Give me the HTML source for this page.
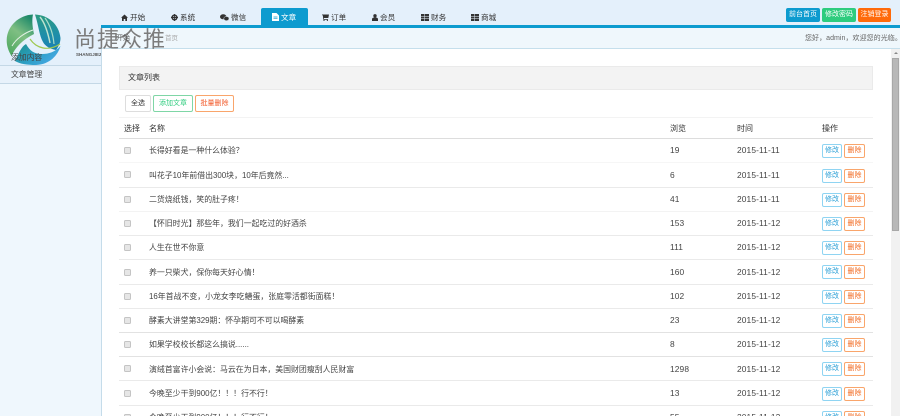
<!DOCTYPE html>
<html><head><meta charset="utf-8">
<style>
html,body{margin:0;padding:0;width:900px;height:416px;overflow:hidden;background:#fff}
body{position:relative;font-family:"Liberation Sans","Noto Sans CJK SC",sans-serif;font-size:8px;color:#444}
.a{position:absolute;white-space:nowrap}
.nav{top:13px;height:10px;line-height:10px;font-size:7.6px;color:#333}
.nav svg{vertical-align:-1px;margin-right:2px}
.tb{top:8px;height:14px;line-height:14px;border-radius:2px;color:#fff;text-align:center;font-size:7px}
.t{left:149px;font-size:7.9px;color:#444;line-height:12px;margin-top:1px}
.n{left:670px;font-size:8.4px;color:#444;line-height:12px;letter-spacing:.12px}
.d{left:737px;font-size:8.4px;color:#444;line-height:12px;letter-spacing:.12px}
.cb{left:124px;width:5px;height:5px;border:1px solid #c4c4c4;border-radius:1.5px;background:#e6e6e6;margin-top:1px}
.e,.x{height:14px;line-height:12px;border-radius:2px;font-size:7px;text-align:center;box-sizing:border-box;background:#fff}
.e{left:822px;width:20px;border:1px solid #8fd4f2;color:#2a9fd6}
.x{left:844px;width:21px;border:1px solid #f9a56b;color:#f26a21}
.l{left:119px;width:754px;height:1px;background:#eaeaea}
.h{font-size:8px;color:#333;line-height:12px;top:123px}
</style></head><body>
<div class="a" style="left:0;top:0;width:900px;height:25px;background:#e4f0fb"></div>
<div class="a" style="left:0;top:25px;width:101px;height:40px;background:#e4f0fb"></div>
<div class="a" style="left:0;top:65px;width:101px;height:1px;background:#c4d8e6"></div>
<div class="a" style="left:0;top:66px;width:101px;height:17px;background:#e8f2fb"></div>
<div class="a" style="left:0;top:83px;width:101px;height:1px;background:#c4d8e6"></div>
<div class="a" style="left:0;top:84px;width:101px;height:332px;background:#eff7fd"></div>
<div class="a" style="left:101px;top:48px;width:1px;height:368px;background:#c5dcea"></div>
<div class="a" style="left:101px;top:25px;width:799px;height:3px;background:#0d9bcf"></div>
<div class="a" style="left:101px;top:28px;width:799px;height:20px;background:#eff7fc"></div>
<div class="a" style="left:101px;top:48px;width:799px;height:1px;background:#c5dfec"></div>

<svg class="a" style="left:6px;top:13px" width="55" height="53" viewBox="0 0 55 53">
<defs>
<linearGradient id="g1" x1="0.7" y1="0" x2="0.2" y2="1"><stop offset="0" stop-color="#1f8a6a"/><stop offset=".45" stop-color="#7fbf83"/><stop offset="1" stop-color="#4fa860"/></linearGradient>
<linearGradient id="g2" x1="0" y1="0" x2="0" y2="1"><stop offset="0" stop-color="#2c9a80"/><stop offset=".55" stop-color="#1f8fa8"/><stop offset="1" stop-color="#1a80b4"/></linearGradient>
<linearGradient id="g3" x1="0" y1="0" x2="1" y2="0.6"><stop offset="0" stop-color="#1a8f8c"/><stop offset=".6" stop-color="#2fa0c8"/><stop offset="1" stop-color="#46a8e4"/></linearGradient>
</defs>
<path d="M27 1.5C13 2 1 13 .7 27C.6 33 2.5 38 5.5 43C9 35 16 27 28 21C26 12 26 6 27 1.5Z" fill="url(#g1)"/>
<path d="M27 17C18 20 10 26 6 33" stroke="#e4f2e6" stroke-width="1" fill="none"/>
<path d="M29 1.5C42 2 53 11 54.5 25C54.5 29 53 33 50 37C44 36 39 33 37 29C33 22 33 14 29 1.5Z" fill="url(#g2)"/>
<path d="M34 4C39 10 42 20 44 30" stroke="#bfe3d0" stroke-width="1.4" fill="none"/>
<path d="M39 5C44 12 47 20 48 31" stroke="#a8dcc8" stroke-width="1.2" fill="none"/>
<path d="M9 48C13 40 15 34 20 31C24 38 28 41 36 41C43 41 49 39 54.5 33C52 42 44 51.5 30 52C21 52 14 51 9 48Z" fill="url(#g3)"/>
<path d="M24 26C30 35 42 39 54 31" stroke="#9fc850" stroke-width="1.2" fill="none"/>
</svg>
<div class="a" style="left:74px;top:27px;font-size:22px;line-height:26px;color:#7c7c7c;letter-spacing:1px">尚捷众推</div>
<div class="a" style="left:76px;top:52px;font-size:4.5px;line-height:6px;color:#555;font-weight:bold;width:25px;overflow:hidden">SHANGJIEZHONGTUI</div>
<div class="a" style="left:11px;top:52px;font-size:7.8px;line-height:11px;color:#444">添加内容</div>
<div class="a" style="left:11px;top:69px;font-size:7.8px;line-height:11px;color:#444">文章管理</div>

<div class="a nav" style="left:121px"><svg width="7" height="7" viewBox="0 0 7 7"><path d="M3.5 .5L7 3.7H6V7H4.3V5H2.7V7H1V3.7H0Z" fill="#333"/></svg>开始</div>
<div class="a nav" style="left:171px"><svg width="7" height="7" viewBox="0 0 7 7"><circle cx="3.5" cy="3.5" r="2.3" fill="none" stroke="#333" stroke-width="1.6"/><path d="M3.5 0V7M0 3.5H7" stroke="#333" stroke-width=".9"/></svg>系统</div>
<div class="a nav" style="left:220px"><svg width="9" height="7" viewBox="0 0 9 7"><ellipse cx="3.2" cy="2.8" rx="3.2" ry="2.5" fill="#333"/><ellipse cx="6.4" cy="4.6" rx="2.6" ry="2.1" fill="#333" stroke="#e4f0fb" stroke-width=".5"/></svg>微信</div>
<div class="a" style="left:261px;top:8px;width:47px;height:17px;background:#0d9bcf;border-radius:2px 2px 0 0"></div>
<div class="a nav" style="left:272px;color:#fff;top:13px"><svg width="7" height="8" viewBox="0 0 7 8"><path d="M0 0H4.5L7 2.5V8H0Z" fill="#fff"/><path d="M1.5 4H5.5M1.5 5.7H5.5" stroke="#0d9bcf" stroke-width=".7"/></svg>文章</div>
<div class="a nav" style="left:322px"><svg width="7" height="7" viewBox="0 0 7 7"><path d="M0 .5H7L6.3 4H1.8L2 5H6V5.8H1.3L.8 1.3H0Z" fill="#333"/><circle cx="2" cy="6.4" r=".6" fill="#333"/><circle cx="5.4" cy="6.4" r=".6" fill="#333"/></svg>订单</div>
<div class="a nav" style="left:372px"><svg width="6" height="7" viewBox="0 0 6 7"><circle cx="3" cy="1.8" r="1.7" fill="#333"/><path d="M0 7V5.2C0 4 1.2 3.4 3 3.4S6 4 6 5.2V7Z" fill="#333"/></svg>会员</div>
<div class="a nav" style="left:421px"><svg width="8" height="7" viewBox="0 0 8 7"><path d="M0 0H3V2H0ZM3.5 0H8V2H3.5ZM0 2.5H3V4.5H0ZM3.5 2.5H8V4.5H3.5ZM0 5H3V7H0ZM3.5 5H8V7H3.5Z" fill="#333"/></svg>财务</div>
<div class="a nav" style="left:471px"><svg width="8" height="7" viewBox="0 0 8 7"><path d="M0 0H3V2H0ZM3.5 0H8V2H3.5ZM0 2.5H3V4.5H0ZM3.5 2.5H8V4.5H3.5ZM0 5H3V7H0ZM3.5 5H8V7H3.5Z" fill="#333"/></svg>商城</div>

<div class="a tb" style="left:786px;width:34px;background:#0d9bcf">前台首页</div>
<div class="a tb" style="left:822px;width:34px;background:#2ecc7e">修改密码</div>
<div class="a tb" style="left:858px;width:33px;background:#ff6a0a">注销登录</div>

<div class="a" style="left:116px;top:33px;font-size:7px;line-height:11px;color:#555">开始</div>
<div class="a" style="left:165px;top:33px;font-size:6.5px;line-height:11px;color:#aaa">首页</div>
<div class="a" style="left:805px;top:33px;font-size:7px;line-height:11px;color:#666;letter-spacing:.05px">您好，admin，欢迎您的光临。</div>

<div class="a" style="left:119px;top:66px;width:752px;height:22px;background:#f3f3f3;border:1px solid #eaeaea"></div>
<div class="a" style="left:128px;top:72px;font-size:8px;line-height:12px;color:#333">文章列表</div>

<div class="a" style="left:125px;top:95px;width:26px;height:17px;box-sizing:border-box;border:1px solid #ddd;border-radius:2px;text-align:center;line-height:15px;font-size:7px;color:#333">全选</div>
<div class="a" style="left:153px;top:95px;width:40px;height:17px;box-sizing:border-box;border:1px solid #7fd6a6;border-radius:2px;text-align:center;line-height:15px;font-size:7px;color:#2ecc7e">添加文章</div>
<div class="a" style="left:195px;top:95px;width:39px;height:17px;box-sizing:border-box;border:1px solid #f9a56b;border-radius:2px;text-align:center;line-height:15px;font-size:7px;color:#f25a2a">批量删除</div>

<div class="a l" style="top:117px;background:#f3f3f3"></div>
<div class="a h" style="left:124px">选择</div><div class="a h" style="left:149px">名称</div><div class="a h" style="left:670px">浏览</div><div class="a h" style="left:737px">时间</div><div class="a h" style="left:822px">操作</div>
<div class="a l" style="top:138px;background:#ddd"></div>

<div class="a cb" style="top:146px"></div><div class="a t" style="top:144px">长得好看是一种什么体验？</div><div class="a n" style="top:144px">19</div><div class="a d" style="top:144px">2015-11-11</div><div class="a e" style="top:144px">修改</div><div class="a x" style="top:144px">删除</div>
<div class="a l" style="top:162px;background:#f6f6f6"></div>
<div class="a cb" style="top:170px"></div><div class="a t" style="top:169px">叫花子10年前借出300块，10年后竟然...</div><div class="a n" style="top:169px">6</div><div class="a d" style="top:169px">2015-11-11</div><div class="a e" style="top:169px">修改</div><div class="a x" style="top:169px">删除</div>
<div class="a l" style="top:187px"></div>
<div class="a cb" style="top:195px"></div><div class="a t" style="top:193px">二货烧纸钱，笑的肚子疼！</div><div class="a n" style="top:193px">41</div><div class="a d" style="top:193px">2015-11-11</div><div class="a e" style="top:193px">修改</div><div class="a x" style="top:193px">删除</div>
<div class="a l" style="top:211px;background:#f3f3f3"></div>
<div class="a cb" style="top:219px"></div><div class="a t" style="top:217px">【怀旧时光】那些年，我们一起吃过的好酒杀</div><div class="a n" style="top:217px">153</div><div class="a d" style="top:217px">2015-11-12</div><div class="a e" style="top:217px">修改</div><div class="a x" style="top:217px">删除</div>
<div class="a l" style="top:235px"></div>
<div class="a cb" style="top:243px"></div><div class="a t" style="top:241px">人生在世不你意</div><div class="a n" style="top:241px">111</div><div class="a d" style="top:241px">2015-11-12</div><div class="a e" style="top:241px">修改</div><div class="a x" style="top:241px">删除</div>
<div class="a l" style="top:259px"></div>
<div class="a cb" style="top:268px"></div><div class="a t" style="top:266px">养一只柴犬，保你每天好心情！</div><div class="a n" style="top:266px">160</div><div class="a d" style="top:266px">2015-11-12</div><div class="a e" style="top:265px">修改</div><div class="a x" style="top:265px">删除</div>
<div class="a l" style="top:284px"></div>
<div class="a cb" style="top:292px"></div><div class="a t" style="top:290px">16年首战不变，小龙女李吃鳝蛋，张庭零活都街面糕！</div><div class="a n" style="top:290px">102</div><div class="a d" style="top:290px">2015-11-12</div><div class="a e" style="top:290px">修改</div><div class="a x" style="top:290px">删除</div>
<div class="a l" style="top:308px"></div>
<div class="a cb" style="top:316px"></div><div class="a t" style="top:314px">酵素大讲堂第329期：怀孕期可不可以喝酵素</div><div class="a n" style="top:314px">23</div><div class="a d" style="top:314px">2015-11-12</div><div class="a e" style="top:314px">修改</div><div class="a x" style="top:314px">删除</div>
<div class="a l" style="top:332px;background:#e2e2e2"></div>
<div class="a cb" style="top:340px"></div><div class="a t" style="top:338px">如果学校校长都这么搞说......</div><div class="a n" style="top:338px">8</div><div class="a d" style="top:338px">2015-11-12</div><div class="a e" style="top:338px">修改</div><div class="a x" style="top:338px">删除</div>
<div class="a l" style="top:356px;background:#e2e2e2"></div>
<div class="a cb" style="top:364px"></div><div class="a t" style="top:363px">演绒首富许小会说：马云在为日本，美国财团瘦刮人民财富</div><div class="a n" style="top:363px">1298</div><div class="a d" style="top:363px">2015-11-12</div><div class="a e" style="top:362px">修改</div><div class="a x" style="top:362px">删除</div>
<div class="a l" style="top:380px"></div>
<div class="a cb" style="top:389px"></div><div class="a t" style="top:387px">今晚至少干到900亿！！！行不行！</div><div class="a n" style="top:387px">13</div><div class="a d" style="top:387px">2015-11-12</div><div class="a e" style="top:387px">修改</div><div class="a x" style="top:387px">删除</div>
<div class="a l" style="top:405px"></div>
<div class="a cb" style="top:413px"></div><div class="a t" style="top:411px">今晚至少干到900亿！！！行不行！</div><div class="a n" style="top:411px">55</div><div class="a d" style="top:411px">2015-11-12</div><div class="a e" style="top:411px">修改</div><div class="a x" style="top:411px">删除</div>

<div class="a" style="left:891px;top:49px;width:9px;height:367px;background:#f1f1f1"></div>
<div class="a" style="left:892px;top:58px;width:7px;height:173px;box-sizing:border-box;background:#b8b8b8;border:1px solid #a8a8a8"></div>
<div class="a" style="left:894px;top:52px;width:0;height:0;border-left:2px solid transparent;border-right:2px solid transparent;border-bottom:2px solid #888"></div>
</body></html>
